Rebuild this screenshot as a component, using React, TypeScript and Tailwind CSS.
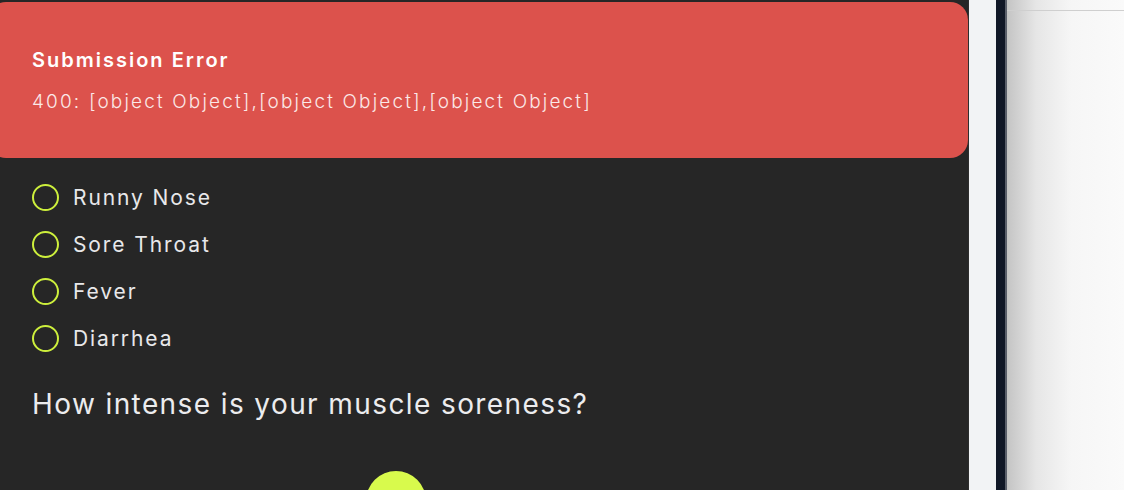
import { useState } from "react";

const SYMPTOMS = ["Runny Nose", "Sore Throat", "Fever", "Diarrhea"];

function SymptomOption({ label, checked, onToggle }: { label: string; checked: boolean; onToggle: () => void }) {
    return (
        <button className="flex h-[47px] cursor-pointer items-center gap-[14px] text-left" onClick={onToggle}>
            <span
                className={`size-[27px] shrink-0 rounded-full border-2 border-[#cdef3c] ${checked ? "bg-[#d3f53f]" : ""}`}
            />
            <span className="text-[21px] leading-none tracking-[1.9px] text-[#e8e8ea]">{label}</span>
        </button>
    );
}

export default function App() {
    const [checked, setChecked] = useState<number[]>([]);

    const toggle = (i: number) =>
        setChecked(prev => (prev.includes(i) ? prev.filter(x => x !== i) : [...prev, i]));

    return (
        <div className="flex h-[490px] w-[1124px] overflow-hidden font-['Inter',sans-serif]">
            {/* Form panel */}
            <div className="relative h-full w-[969px] shrink-0 border-r border-[#2e2e2e] bg-[#262626]">
                {/* Toast */}
                <div className="absolute top-[2px] right-0 left-[-12px] z-10 flex h-[156px] flex-col justify-center gap-[22px] rounded-[18px] bg-[#dc524c] pl-[44px]">
                    <h2 className="text-[20px] leading-none font-semibold tracking-[2px] text-white">
                        Submission Error
                    </h2>
                    <p className="text-[19px] leading-none font-light tracking-[2.15px] text-[#fbe9e8]">
                        400: [object Object],[object Object],[object Object]
                    </p>
                </div>

                <div className="flex flex-col px-8 pt-[174px]">
                    {SYMPTOMS.map((s, i) => (
                        <SymptomOption key={s} label={s} checked={checked.includes(i)} onToggle={() => toggle(i)} />
                    ))}

                    <h3 className="mt-[28px] text-[28px] leading-none tracking-[1.4px] text-[#ececee]">
                        How intense is your muscle soreness?
                    </h3>

                    {/* Slider thumb */}
                    <div className="mt-[53px] ml-[334px] size-[60px] rounded-full bg-[#d8fa4c]" />
                </div>
            </div>

            {/* Side strips */}
            <div className="h-full w-[27px] shrink-0 bg-[#f2f3f5]" />
            <div className="h-full w-[11px] shrink-0 border-r-2 border-[#5b606b] bg-[#111827]" />

            {/* Next window */}
            <div className="flex h-full flex-1 flex-col bg-[linear-gradient(to_right,#c4c4c4,#e6e6e6_25%,#f6f6f6_55%,#fafafa)]">
                <div className="h-[11px] border-b border-[#cfcfcf]" />
            </div>
        </div>
    );
}
